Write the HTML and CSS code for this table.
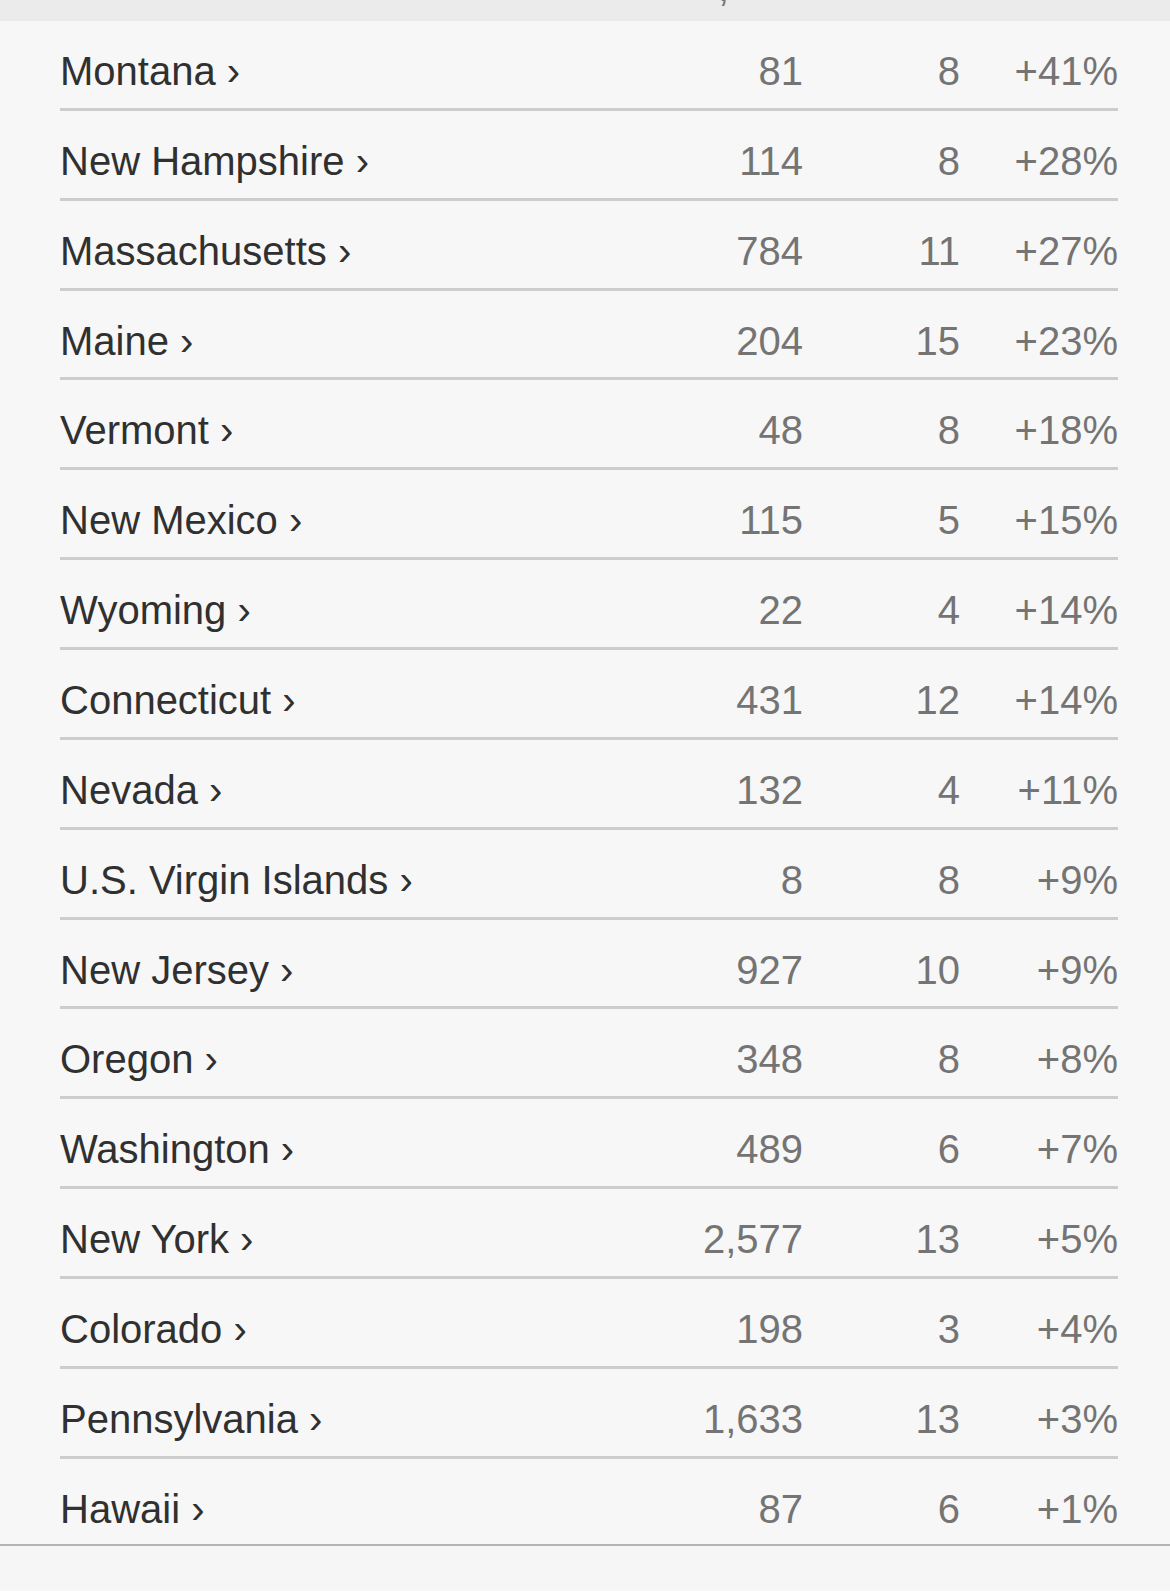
FILE: index.html
```html
<!DOCTYPE html>
<html lang="en">
<head>
<meta charset="utf-8">
<title>States</title>
<link rel="stylesheet" href="styles.css">
</head>
<body>
<div class="band"><div class="band-text">,</div></div>
<div class="table">
  <div class="row"><span class="name">Montana ›</span><span class="num">81</span><span class="num">8</span><span class="num">+41%</span></div>
  <div class="row"><span class="name">New Hampshire ›</span><span class="num">114</span><span class="num">8</span><span class="num">+28%</span></div>
  <div class="row"><span class="name">Massachusetts ›</span><span class="num">784</span><span class="num">11</span><span class="num">+27%</span></div>
  <div class="row"><span class="name">Maine ›</span><span class="num">204</span><span class="num">15</span><span class="num">+23%</span></div>
  <div class="row"><span class="name">Vermont ›</span><span class="num">48</span><span class="num">8</span><span class="num">+18%</span></div>
  <div class="row"><span class="name">New Mexico ›</span><span class="num">115</span><span class="num">5</span><span class="num">+15%</span></div>
  <div class="row"><span class="name">Wyoming ›</span><span class="num">22</span><span class="num">4</span><span class="num">+14%</span></div>
  <div class="row"><span class="name">Connecticut ›</span><span class="num">431</span><span class="num">12</span><span class="num">+14%</span></div>
  <div class="row"><span class="name">Nevada ›</span><span class="num">132</span><span class="num">4</span><span class="num">+11%</span></div>
  <div class="row"><span class="name">U.S. Virgin Islands ›</span><span class="num">8</span><span class="num">8</span><span class="num">+9%</span></div>
  <div class="row"><span class="name">New Jersey ›</span><span class="num">927</span><span class="num">10</span><span class="num">+9%</span></div>
  <div class="row"><span class="name">Oregon ›</span><span class="num">348</span><span class="num">8</span><span class="num">+8%</span></div>
  <div class="row"><span class="name">Washington ›</span><span class="num">489</span><span class="num">6</span><span class="num">+7%</span></div>
  <div class="row"><span class="name">New York ›</span><span class="num">2,577</span><span class="num">13</span><span class="num">+5%</span></div>
  <div class="row"><span class="name">Colorado ›</span><span class="num">198</span><span class="num">3</span><span class="num">+4%</span></div>
  <div class="row"><span class="name">Pennsylvania ›</span><span class="num">1,633</span><span class="num">13</span><span class="num">+3%</span></div>
  <div class="row row-last"><span class="name">Hawaii ›</span><span class="num">87</span><span class="num">6</span><span class="num">+1%</span></div>
</div>
<div class="footer"></div>
</body>
</html>
```
FILE: styles.css
```css
html, body {
  margin: 0;
  padding: 0;
  background: #f7f7f7;
  font-family: "Liberation Sans", Arial, sans-serif;
}

.band {
  height: 21px;
  background: #ebebeb;
  overflow: hidden;
}

.band-text {
  margin-top: -33px;
  padding-left: 718px;
  font-size: 40px;
  line-height: 40px;
  color: #777;
}

.table {
  margin: 0 52px 0 60px;
}

.row {
  box-sizing: border-box;
  height: 89.87px;
  padding-top: 27px;
  border-bottom: 3px solid #cdcdcd;
  display: grid;
  grid-template-columns: 1fr 159px 157px 158px;
  font-size: 40px;
  line-height: 46px;
}

.row-last {
  height: 85px;
  border-bottom: none;
}

.name {
  color: #303030;
  white-space: nowrap;
}

.num {
  color: #747474;
  text-align: right;
}

.footer {
  height: 44px;
  border-top: 2px solid #b4b4b4;
  background: #f6f6f6;
}
```
